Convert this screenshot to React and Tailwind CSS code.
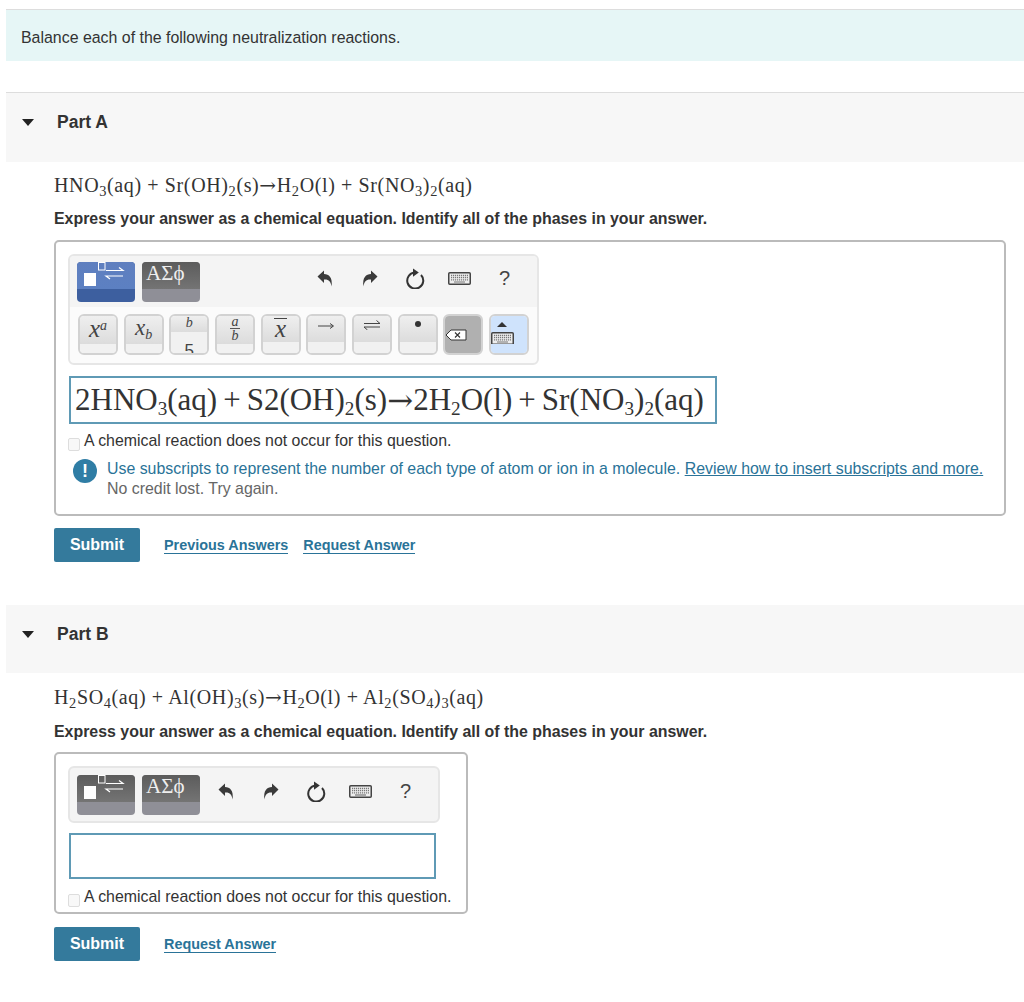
import React from 'react'

const SANS = 'font-["Liberation_Sans",Arial,sans-serif]'
const SERIF = 'font-["Liberation_Serif",serif]'

function Sub({ children }) {
  return <sub className="bottom-[-0.3em] text-[0.72em]">{children}</sub>
}

function BigSub({ children }) {
  return <sub className="bottom-[-0.45em] text-[0.62em]">{children}</sub>
}

function Arrow({ size }) {
  return <span className={`font-["DejaVu_Serif",serif] ${size}`}>→</span>
}

function Undo({ flip }) {
  return (
    <svg width="16" height="17" viewBox="0 0 16 17" className={flip ? '-scale-x-100' : ''}>
      <path d="M0.5 6.5 L7 0.5 V4 C12 4 15.8 7.5 14.6 16.5 C13.8 11.5 11.5 9 7 9.5 V13 Z" fill="#3a3a3a" />
    </svg>
  )
}

function Reset() {
  return (
    <svg width="20" height="21" viewBox="0 0 20 21">
      <path d="M9.5 4.6 A8 8 0 1 0 16 7" fill="none" stroke="#333" strokeWidth="2" />
      <path d="M8 0.5 L13.8 4.6 L8 8.8 Z" fill="#333" />
    </svg>
  )
}

function KeyboardIcon() {
  return (
    <svg width="23" height="13" viewBox="0 0 23 13" className="shrink-0">
      <rect x="0.75" y="0.75" width="21.5" height="11.5" rx="1" fill="#eee" stroke="#444" strokeWidth="1.5" />
      <path d="M3 3.5 H20 M3 5.7 H20 M3 7.9 H20" stroke="#777" strokeWidth="1.3" strokeDasharray="1.2 0.8" />
      <path d="M6 10 H17" stroke="#777" strokeWidth="1.2" />
    </svg>
  )
}

function TemplateGlyph() {
  return (
    <svg width="48" height="26" viewBox="0 0 48 26" className="shrink-0">
      <rect x="6" y="11" width="12" height="13" fill="#fff" />
      <rect x="20.5" y="0.5" width="6.5" height="7.5" fill="none" stroke="#fff" strokeWidth="1" />
      <path d="M28 8.5 H45 L41 5.5 M45 14 H28 L32 17" fill="none" stroke="#fff" strokeWidth="1.2" />
    </svg>
  )
}

function ToolTab({ blue, children }) {
  return (
    <div
      className={`flex h-[40px] w-[58px] flex-col overflow-hidden rounded-[4px] ${
        blue ? 'bg-[#3d5f9f]' : 'bg-[#8f8f97]'
      }`}
    >
      <div
        className={`flex h-[27px] items-start pl-[1px] ${
          blue ? 'bg-gradient-to-b from-[#5f7fbf] to-[#5c80c2]' : 'bg-gradient-to-b from-[#5c5c5c] to-[#747474]'
        }`}
      >
        {children}
      </div>
    </div>
  )
}

function SymbolTab() {
  return (
    <ToolTab>
      <span className={`${SERIF} pl-[3px] text-[21px] leading-[23px] text-[#eee]`}>ΑΣϕ</span>
    </ToolTab>
  )
}

function Slot({ children }) {
  return <div className="flex w-[45px] items-center justify-center">{children}</div>
}

function Actions() {
  return (
    <div className="flex h-[32px] items-center">
      <Slot>
        <Undo />
      </Slot>
      <Slot>
        <Undo flip />
      </Slot>
      <Slot>
        <Reset />
      </Slot>
      <Slot>
        <KeyboardIcon />
      </Slot>
      <Slot>
        <span className="text-[20px] leading-none text-[#444]">?</span>
      </Slot>
    </div>
  )
}

function Key({ band = 'h-[9px]', bg = 'bg-gradient-to-b from-[#efefef] to-[#dcdcdc]', low = 'bg-[#f1f1f1]', align = 'justify-center', lowContent, children }) {
  return (
    <div className="flex h-[41px] w-[40px] flex-col overflow-hidden rounded-[6px] border-2 border-[#d2d2d2]">
      <div className={`flex flex-1 items-start overflow-hidden ${align} ${bg}`}>{children}</div>
      <div className={`${band} ${low} overflow-hidden`}>{lowContent}</div>
    </div>
  )
}

function MathKeys() {
  const ital = `${SERIF} italic text-[#444]`
  return (
    <div className="flex items-start justify-between pt-[7px] pr-[8px] pb-[8px] pl-[8px]">
      <Key>
        <span className={`${ital} text-[25px] leading-[26px]`}>
          x<sup className="text-[14px]">a</sup>
        </span>
      </Key>
      <Key>
        <span className={`${ital} text-[23px] leading-[24px]`}>
          x<sub className="text-[14px]">b</sub>
        </span>
      </Key>
      <Key
        band="h-[21px]"
        lowContent={<div className={`${SANS} pt-[10px] text-center text-[17px] leading-[18px] text-[#444]`}>5</div>}
      >
        <span className={`${ital} text-[14px] leading-[14px]`}>b</span>
      </Key>
      <Key>
        <div className={`${ital} flex flex-col items-center text-[14px]`}>
          <span className="leading-[12px]">a</span>
          <span className="w-[10px] border-t border-[#555] text-center leading-[14px]">b</span>
        </div>
      </Key>
      <Key band="h-[11px]">
        <span className={`${ital} mt-[2px] border-t border-[#444] px-[1px] text-[25px] leading-[20px]`}>x</span>
      </Key>
      <Key band="h-[11px]">
        <svg width="18" height="10" viewBox="0 0 18 10" className="mt-[5px]">
          <path d="M1 5 H16 M13 2.5 L16.5 5 L13 7.5" fill="none" stroke="#444" strokeWidth="1" />
        </svg>
      </Key>
      <Key band="h-[11px]">
        <svg width="18" height="10" viewBox="0 0 18 10" className="mt-[4px]">
          <path d="M1 3.5 H17 L13.5 0.5 M17 7 H1 L4.5 10" fill="none" stroke="#444" strokeWidth="1" />
        </svg>
      </Key>
      <Key band="h-[11px]">
        <span className="mt-[5px] h-[6px] w-[6px] rounded-full bg-[#333]" />
      </Key>
      <Key bg="bg-[#b0b0b0]" low="bg-[#b0b0b0]" align="justify-start">
        <svg width="22" height="12" viewBox="0 0 22 12" className="mt-[13px] shrink-0">
          <path d="M1 6 L6 1 H21 V11 H6 Z" fill="#fff" stroke="#333" strokeWidth="1" />
          <path d="M10 3.5 L15 8.5 M15 3.5 L10 8.5" stroke="#333" strokeWidth="1.1" />
        </svg>
      </Key>
      <Key bg="bg-[#cfe3fc]" low="bg-[#cfe3fc]" align="justify-start">
        <div className="mt-[6px] flex flex-col items-center gap-[5px]">
          <span className="h-0 w-0 border-x-[5px] border-b-[5px] border-x-transparent border-b-[#333]" />
          <KeyboardIcon />
        </div>
      </Key>
    </div>
  )
}

function NoReaction() {
  return (
    <div className="flex h-[18px] items-start text-[15.9px] leading-[20px] text-[#333]">
      <span className="mt-[7px] h-[13px] w-[12px] shrink-0 rounded-[2px] border border-[#ddd] bg-[#f8f8f8]" />
      <span className="ml-[4px] whitespace-nowrap">A chemical reaction does not occur for this question.</span>
    </div>
  )
}

function Equation({ children }) {
  return (
    <div className={`${SERIF} text-[20px] leading-[24px] tracking-[0.62px] whitespace-nowrap text-[#333]`}>
      {children}
    </div>
  )
}

function PartHeader({ label, line, height }) {
  return (
    <div className={`ml-[6px] flex items-start bg-[#f7f7f7] pl-[16px] pt-[20px] ${height} ${line ? 'border-t border-[#ddd]' : ''}`}>
      <span className="mt-[6px] h-0 w-0 border-x-[6.5px] border-t-[7px] border-x-transparent border-t-[#222]" />
      <span className="ml-[22px] pl-[1px] text-[17.5px] leading-[18px] font-bold text-[#333]">{label}</span>
    </div>
  )
}

function Prompt({ top }) {
  return (
    <div className={`${top} text-[15.92px] leading-[20px] font-bold whitespace-nowrap text-[#333]`}>
      Express your answer as a chemical equation. Identify all of the phases in your answer.
    </div>
  )
}

function Submit() {
  return (
    <div className="flex h-[34px] w-[86px] items-center justify-center rounded-[2px] bg-[#347a9c] text-[16px] font-bold text-white">
      Submit
    </div>
  )
}

function TextLink({ children }) {
  return <span className="border-b border-[#2a7398] text-[14.4px] leading-[15px] font-bold text-[#2a7398]">{children}</span>
}

export default function App() {
  return (
    <div className={`${SANS} h-[1002px] overflow-hidden bg-white pt-[9px]`}>
      <div className="ml-[6px] flex h-[52px] items-center border-t border-[#ddd] bg-[#e6f6f6] pl-[15px] pt-[4px] text-[15.92px] text-[#333]">
        Balance each of the following neutralization reactions.
      </div>

      {/* Part A */}
      <div className="mt-[31px]">
        <PartHeader label="Part A" line height="h-[70px]" />
      </div>
      <div className="pl-[54px] pt-[11px]">
        <Equation>
          HNO<Sub>3</Sub>(aq) + Sr(OH)<Sub>2</Sub>(s)<Arrow size="text-[20px]" />H<Sub>2</Sub>O(l) + Sr(NO<Sub>3</Sub>)<Sub>2</Sub>(aq)
        </Equation>
        <Prompt top="mt-[12px]" />

        <div className="mt-[11px] h-[276px] w-[952px] rounded-[5px] border-2 border-[#bbb] pl-[12px] pt-[12px]">
          <div className="w-[471px] overflow-hidden rounded-[6px] border-2 border-[#e6e6e6] bg-[#fbfbfb]">
            <div className="flex h-[51px] items-start justify-between bg-[#f4f4f4] pl-[7px] pr-[10px] pt-[6px]">
              <div className="flex gap-[7px]">
                <ToolTab blue>
                  <TemplateGlyph />
                </ToolTab>
                <SymbolTab />
              </div>
              <Actions />
            </div>
            <MathKeys />
          </div>

          <div className={`${SERIF} ml-[1px] mt-[11px] flex h-[48px] w-[648px] items-center border-2 border-[#5f9ab5] pl-[4px] text-[31px] whitespace-nowrap text-[#333]`}>
            2HNO<BigSub>3</BigSub>(aq)<span className="px-[6px]">+</span>S2(OH)<BigSub>2</BigSub>(s)<Arrow size="text-[31px]" />2H<BigSub>2</BigSub>O(l)<span className="px-[6px]">+</span>Sr(NO<BigSub>3</BigSub>)<BigSub>2</BigSub>(aq)
          </div>

          <div className="mt-[7px]">
            <NoReaction />
          </div>

          <div className="mt-[10px] flex items-start pl-[5px]">
            <span className="flex h-[24px] w-[24px] shrink-0 items-center justify-center rounded-full bg-[#2f7da5] text-[18px] font-bold text-white">
              !
            </span>
            <div className="ml-[10px] text-[15.9px] leading-[20px]">
              <div className="whitespace-nowrap text-[#2a7398]">
                Use subscripts to represent the number of each type of atom or ion in a molecule.{' '}
                <span className="underline">Review how to insert subscripts and more.</span>
              </div>
              <div className="text-[#666]">No credit lost. Try again.</div>
            </div>
          </div>
        </div>

        <div className="mt-[12px] flex items-center">
          <Submit />
          <div className="ml-[24px] flex gap-[15px] pt-[2px]">
            <TextLink>Previous Answers</TextLink>
            <TextLink>Request Answer</TextLink>
          </div>
        </div>
      </div>

      {/* Part B */}
      <div className="mt-[43px]">
        <PartHeader label="Part B" height="h-[68px]" />
      </div>
      <div className="pl-[54px] pt-[12px]">
        <Equation>
          H<Sub>2</Sub>SO<Sub>4</Sub>(aq) + Al(OH)<Sub>3</Sub>(s)<Arrow size="text-[20px]" />H<Sub>2</Sub>O(l) + Al<Sub>2</Sub>(SO<Sub>4</Sub>)<Sub>3</Sub>(aq)
        </Equation>
        <Prompt top="mt-[13px]" />

        <div className="mt-[10px] h-[162px] w-[414px] rounded-[5px] border-2 border-[#bbb] pl-[12px] pt-[12px]">
          <div className="flex h-[57px] w-[372px] items-start justify-between rounded-[6px] border-2 border-[#e6e6e6] bg-[#f4f4f4] pl-[7px] pr-[10px] pt-[7px]">
            <div className="flex gap-[7px]">
              <ToolTab>
                <TemplateGlyph />
              </ToolTab>
              <SymbolTab />
            </div>
            <Actions />
          </div>

          <div className="ml-[1px] mt-[10px] h-[46px] w-[367px] border-2 border-[#5f9ab5]" />

          <div className="mt-[8px]">
            <NoReaction />
          </div>
        </div>

        <div className="mt-[13px] flex items-center">
          <Submit />
          <div className="ml-[24px]">
            <TextLink>Request Answer</TextLink>
          </div>
        </div>
      </div>
    </div>
  )
}
